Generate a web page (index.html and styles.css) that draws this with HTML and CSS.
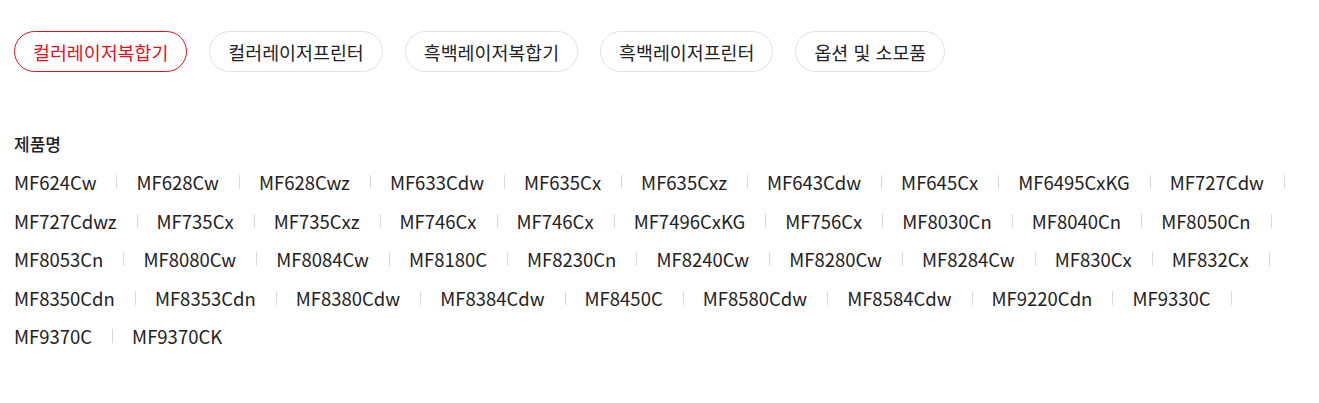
FILE: index.html
```html
<!DOCTYPE html>
<html lang="ko">
<head>
    <meta charset="UTF-8">
    <meta name="viewport" content="width=device-width, initial-scale=1.0">
    <title>제품명</title>
    <link rel="stylesheet" href="styles.css">
</head>
<body>

<div class="tabs">
    <button class="tab active">컬러레이저복합기</button>
    <button class="tab">컬러레이저프린터</button>
    <button class="tab">흑백레이저복합기</button>
    <button class="tab">흑백레이저프린터</button>
    <button class="tab">옵션 및 소모품</button>
</div>

<div class="products">
    <h3 class="title">제품명</h3>
    <ul class="modelList">
        <li>MF624Cw</li>
        <li>MF628Cw</li>
        <li>MF628Cwz</li>
        <li>MF633Cdw</li>
        <li>MF635Cx</li>
        <li>MF635Cxz</li>
        <li>MF643Cdw</li>
        <li>MF645Cx</li>
        <li>MF6495CxKG</li>
        <li>MF727Cdw</li>
        <li>MF727Cdwz</li>
        <li>MF735Cx</li>
        <li>MF735Cxz</li>
        <li>MF746Cx</li>
        <li>MF746Cx</li>
        <li>MF7496CxKG</li>
        <li>MF756Cx</li>
        <li>MF8030Cn</li>
        <li>MF8040Cn</li>
        <li>MF8050Cn</li>
        <li>MF8053Cn</li>
        <li>MF8080Cw</li>
        <li>MF8084Cw</li>
        <li>MF8180C</li>
        <li>MF8230Cn</li>
        <li>MF8240Cw</li>
        <li>MF8280Cw</li>
        <li>MF8284Cw</li>
        <li>MF830Cx</li>
        <li>MF832Cx</li>
        <li>MF8350Cdn</li>
        <li>MF8353Cdn</li>
        <li>MF8380Cdw</li>
        <li>MF8384Cdw</li>
        <li>MF8450C</li>
        <li>MF8580Cdw</li>
        <li>MF8584Cdw</li>
        <li>MF9220Cdn</li>
        <li>MF9330C</li>
        <li>MF9370C</li>
        <li>MF9370CK</li>
    </ul>
</div>

</body>
</html>
```

FILE: styles.css
```css
body {
    margin: 0;
    padding: 31px 14px 0;
    font-family: "Noto Sans CJK KR", "Noto Sans", sans-serif;
    color: #222;
    background: #fff;
}
.tabs {
    display: flex;
    gap: 22px;
}
.tab {
    height: 41px;
    padding: 0 18px;
    border: 1px solid #e2e2e2;
    border-radius: 21px;
    background: #fff;
    font-family: inherit;
    font-size: 18.4px;
    color: #222;
    cursor: pointer;
}
.tab.active {
    border-color: #e0121f;
    color: #e0121f;
}
.products {
    margin-top: 60px;
}
.title {
    margin: 0 0 10px;
    font-size: 17px;
    font-weight: 500;
    line-height: 24px;
}
.modelList {
    list-style: none;
    margin: 0;
    padding: 0;
    width: 1292px;
    display: flex;
    flex-wrap: wrap;
    row-gap: 6.5px;
}
.modelList li {
    font-size: 18.5px;
    line-height: 32px;
    display: flex;
    align-items: center;
}
.modelList li:not(:last-child)::after {
    content: "";
    width: 1px;
    height: 14px;
    margin: 0 19px 0 20px;
    background: #d9d9d9;
}
```
